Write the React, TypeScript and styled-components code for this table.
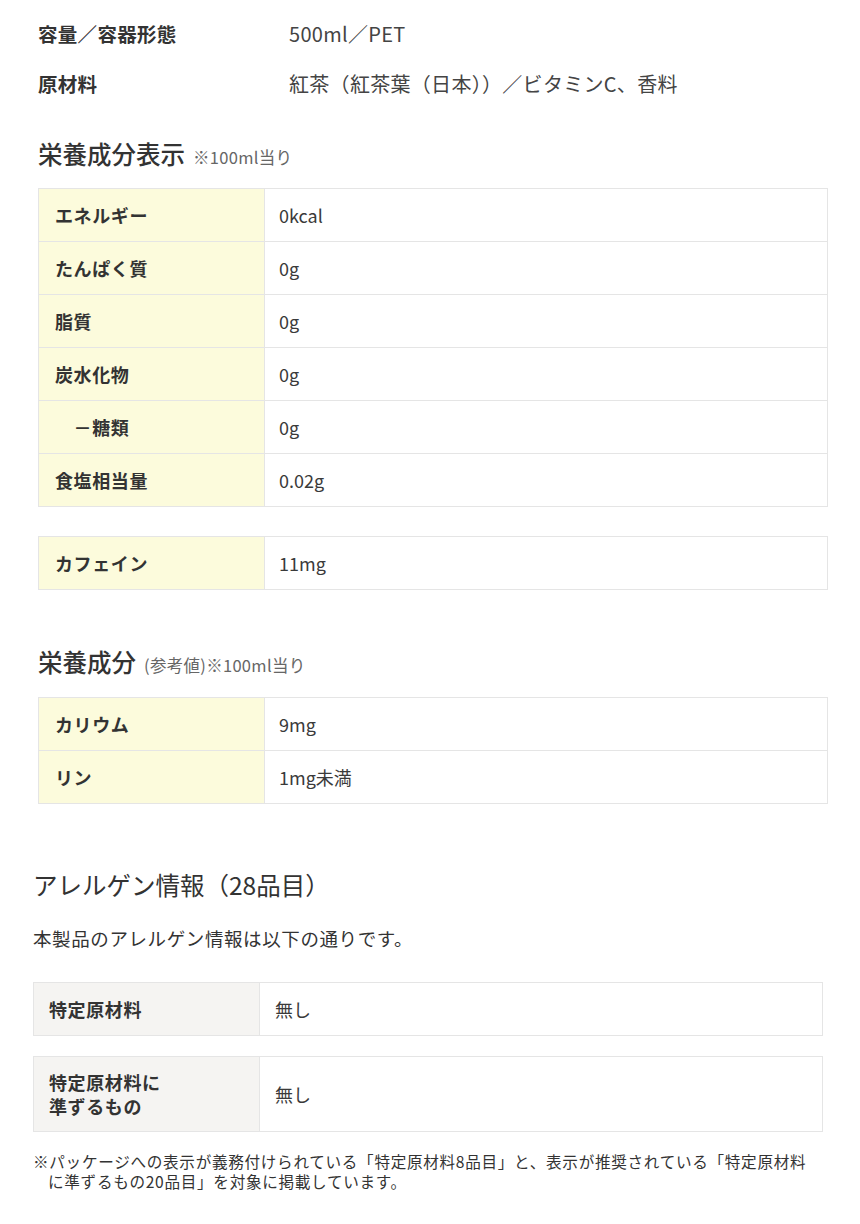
import React, { FunctionComponent } from "react";
import styled, { createGlobalStyle } from "styled-components";

const GlobalStyle = createGlobalStyle`
  body {
    background-color: #ffffff;
    color: #333333;
    font-family: "Noto Sans CJK JP", "Noto Sans", sans-serif;
    margin: 0;
  }
`;

const StyledPage = styled.div`
  width: 860px;
  padding-bottom: 40px;
`;

const StyledSection = styled.section<{ $inset: number }>`
  padding-left: ${(p) => p.$inset}px;
  width: 790px;
`;

const SpecList = styled.dl`
  display: grid;
  grid-template-columns: 251px 1fr;
  grid-auto-rows: 50px;
  align-items: center;
  margin: 0;
  padding-top: 8px;

  > dt {
    font-size: 19.5px;
    font-weight: bold;
    letter-spacing: 0.3px;
  }

  > dd {
    color: #444444;
    font-size: 20px;
    letter-spacing: 0.3px;
    margin: 0;
  }
`;

const Heading = styled.h2<{ $top: number; $weight?: number; $bottom: number }>`
  font-size: 24.5px;
  font-weight: ${(p) => p.$weight ?? 500};
  line-height: 34px;
  margin: ${(p) => p.$top}px 0 ${(p) => p.$bottom}px;
`;

const Note = styled.small`
  color: #666666;
  font-size: 16.5px;
  font-weight: normal;
  letter-spacing: 0.3px;
  margin-left: 8px;
`;

const Table = styled.table<{ $top?: number; $tone: "yellow" | "gray" }>`
  border-collapse: collapse;
  margin-top: ${(p) => p.$top ?? 0}px;
  width: 790px;

  td,
  th {
    border: 1px solid #e5e5e5;
    font-size: 18px;
    height: 52px;
    padding: 0 14px;
    text-align: left;
    vertical-align: middle;
  }

  th {
    background-color: ${(p) => (p.$tone === "yellow" ? "#fcfbdc" : "#f5f4f2")};
    font-weight: bold;
    letter-spacing: 0.6px;
    padding-left: ${(p) => (p.$tone === "yellow" ? 16 : 15)}px;
    width: 226px;
    box-sizing: border-box;
  }

  td {
    color: #3a3a3a;
    padding-left: ${(p) => (p.$tone === "yellow" ? 14 : 15)}px;
  }
`;

const TallRow = styled.tr`
  th,
  td {
    height: 74px;
    line-height: 24px;
  }
`;

const Lead = styled.p`
  font-size: 18.5px;
  letter-spacing: 0.6px;
  line-height: 28px;
  margin: 22px 0 30px;
`;

const Footnote = styled.p`
  font-size: 15.6px;
  letter-spacing: 0.7px;
  line-height: 20px;
  margin: 19px 0 0;
  padding-left: 15px;
  text-indent: -15px;
`;

type Row = [string, string];

const facts: Row[] = [
  ["エネルギー", "0kcal"],
  ["たんぱく質", "0g"],
  ["脂質", "0g"],
  ["炭水化物", "0g"],
  ["　－糖類", "0g"],
  ["食塩相当量", "0.02g"]
];

const reference: Row[] = [
  ["カリウム", "9mg"],
  ["リン", "1mg未満"]
];

const Rows: FunctionComponent<{ rows: Row[] }> = ({ rows }) => (
  <tbody>
    {rows.map(([label, value]) => (
      <tr key={label}>
        <th>{label}</th>
        <td>{value}</td>
      </tr>
    ))}
  </tbody>
);

const App: FunctionComponent = () => (
  <StyledPage>
    <GlobalStyle />
    <StyledSection $inset={38}>
      <SpecList>
        <dt>容量／容器形態</dt>
        <dd>500ml／PET</dd>
        <dt>原材料</dt>
        <dd>紅茶（紅茶葉（日本））／ビタミンC、香料</dd>
      </SpecList>

      <Heading $top={29} $bottom={14}>
        栄養成分表示<Note>※100ml当り</Note>
      </Heading>
      <Table $tone="yellow">
        <Rows rows={facts} />
      </Table>
      <Table $tone="yellow" $top={29}>
        <Rows rows={[["カフェイン", "11mg"]]} />
      </Table>

      <Heading $top={55} $bottom={15}>
        栄養成分<Note>(参考値)※100ml当り</Note>
      </Heading>
      <Table $tone="yellow">
        <Rows rows={reference} />
      </Table>
    </StyledSection>

    <StyledSection $inset={33}>
      <Heading $top={64} $bottom={0} $weight={400}>
        アレルゲン情報（28品目）
      </Heading>
      <Lead>本製品のアレルゲン情報は以下の通りです。</Lead>
      <Table $tone="gray">
        <tbody>
          <tr>
            <th>特定原材料</th>
            <td>無し</td>
          </tr>
        </tbody>
      </Table>
      <Table $tone="gray" $top={20}>
        <tbody>
          <TallRow>
            <th>
              特定原材料に
              <br />
              準ずるもの
            </th>
            <td>無し</td>
          </TallRow>
        </tbody>
      </Table>
      <Footnote>
        ※パッケージへの表示が義務付けられている「特定原材料8品目」と、表示が推奨されている「特定原材料
        <br />
        に準ずるもの20品目」を対象に掲載しています。
      </Footnote>
    </StyledSection>
  </StyledPage>
);

export default App;
